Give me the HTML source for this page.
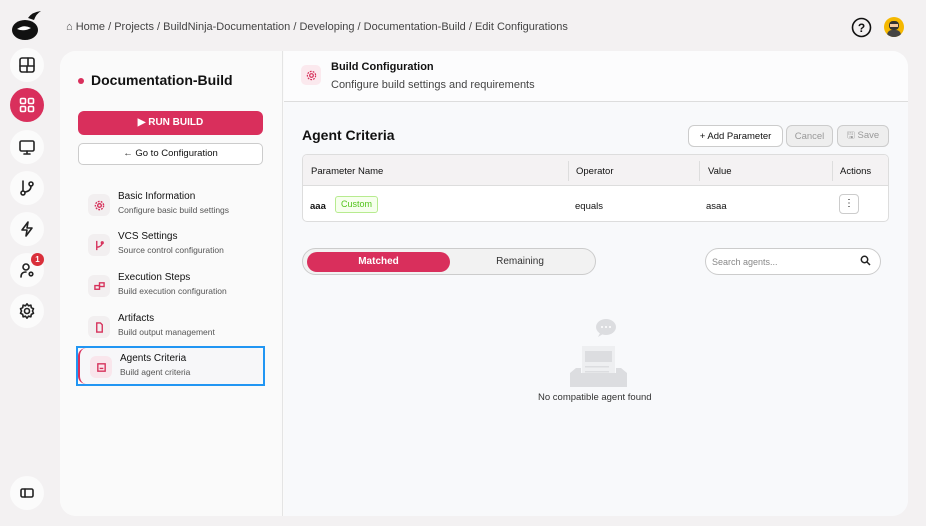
<!DOCTYPE html>
<html><head><meta charset="utf-8"><style>
*{box-sizing:border-box;margin:0;padding:0}
body{width:926px;height:526px;background:#f3f1f2;font-family:"Liberation Sans",sans-serif;position:relative;overflow:hidden;color:#111}
.abs{position:absolute}
.sb{position:absolute;left:10px;width:34px;height:34px;border-radius:50%;background:#fbfbfb;display:flex;align-items:center;justify-content:center}
.sb svg{width:18px;height:18px;fill:none;stroke:#222;stroke-width:1.6;stroke-linecap:round;stroke-linejoin:round}
.crumb{left:66px;top:21px;font-size:11px;color:#444}
.card{left:60px;top:51px;width:848px;height:465px;background:#fafafa;border-radius:16px;overflow:hidden}
.left{left:0;top:0;width:223px;height:465px;background:#fafafa;border-right:1px solid #e4e4e4}
.right{left:224px;top:0;width:624px;height:465px;background:#f8f9fb}
.item{position:absolute;left:28px;width:180px;height:36px}
.item .ic{position:absolute;left:0;top:3px;width:22px;height:22px;border-radius:6px;background:#f2eff0;display:flex;align-items:center;justify-content:center}
.item .ic svg{width:11px;height:11px;fill:none;stroke:#d6305a;stroke-width:1.5}
.item .t{position:absolute;left:30px;top:0;font-size:10px;color:#111}
.item .s{position:absolute;left:30px;top:14px;font-size:8.5px;color:#555}
.btn{position:absolute;height:22px;border:1px solid #ccc;border-radius:6px;font-size:9.5px;display:flex;align-items:center;justify-content:center;background:#fff}
</style></head><body>
<!-- logo -->
<svg class="abs" style="left:10px;top:8px" width="34" height="34" viewBox="0 0 34 34"><ellipse cx="15" cy="22" rx="13" ry="10" fill="#111"/><path d="M18 10 Q22 4 31 3 Q26 6 24 12Z" fill="#111"/><path d="M7 21 Q14 16 21 20 Q14 24 7 21Z" fill="#fff"/></svg>
<div class="sb" style="top:48px"><svg viewBox="0 0 18 18"><rect x="2" y="2" width="14" height="14" rx="2"/><path d="M2 10h14M9 10v6M10 2v8"/></svg></div>
<div class="sb" style="top:88px;background:#d92f5c"><svg viewBox="0 0 18 18" style="stroke:#fff"><rect x="2.5" y="2.5" width="5" height="5" rx="1.2"/><rect x="10.5" y="2.5" width="5" height="5" rx="1.2"/><rect x="2.5" y="10.5" width="5" height="5" rx="1.2"/><rect x="10.5" y="10.5" width="5" height="5" rx="1.2"/></svg></div>
<div class="sb" style="top:130px"><svg viewBox="0 0 18 18"><rect x="2" y="3" width="14" height="10" rx="1.5"/><path d="M9 13v3M6 16h6"/></svg></div>
<div class="sb" style="top:171px"><svg viewBox="0 0 18 18"><circle cx="5" cy="14" r="2"/><circle cx="13" cy="5" r="2"/><path d="M5 2v10M13 7q0 5-6 6"/></svg></div>
<div class="sb" style="top:212px"><svg viewBox="0 0 18 18"><path d="M10 2L4 10h5l-1 6 6-8H9z"/></svg></div>
<div class="sb" style="top:253px"><svg viewBox="0 0 18 18"><circle cx="8" cy="6" r="3"/><path d="M3 16q0-5 5-5"/><circle cx="13" cy="13" r="1.8"/></svg></div>
<div class="abs" style="left:31px;top:253px;width:13px;height:13px;border-radius:50%;background:#d92f3a;color:#fff;font-size:8px;font-weight:bold;text-align:center;line-height:13px">1</div>
<div class="sb" style="top:294px"><svg viewBox="0 0 18 18"><circle cx="9" cy="9" r="2.5"/><path d="M9 1.8l1.5 2 2.4-.6.4 2.4 2.2 1.1-1 2.3 1 2.3-2.2 1.1-.4 2.4-2.4-.6L9 16.2l-1.5-2-2.4.6-.4-2.4-2.2-1.1 1-2.3-1-2.3 2.2-1.1.4-2.4 2.4.6z"/></svg></div>
<div class="sb" style="top:476px"><svg viewBox="0 0 18 18"><rect x="3" y="5" width="12" height="8" rx="1.5"/><path d="M7 5v8"/></svg></div>
<div class="abs crumb">⌂ Home / Projects / BuildNinja-Documentation / Developing / Documentation-Build / Edit Configurations</div>
<svg class="abs" style="left:851px;top:17px" width="21" height="21" viewBox="0 0 21 21"><circle cx="10.5" cy="10.5" r="9" fill="none" stroke="#111" stroke-width="1.6"/><text x="10.5" y="15" font-size="12" text-anchor="middle" font-family="Liberation Sans" font-weight="bold" fill="#111">?</text></svg>
<div class="abs" style="left:884px;top:17px;width:20px;height:20px;border-radius:50%;background:#f5b800;overflow:hidden"><div style="position:absolute;left:5px;top:4px;width:10px;height:9px;background:#333;border-radius:4px"></div><div style="position:absolute;left:6px;top:7px;width:8px;height:3px;background:#f2c9a0"></div><div style="position:absolute;left:3px;top:13px;width:14px;height:8px;background:#444;border-radius:5px 5px 0 0"></div></div>

<div class="abs card">
 <div class="abs left">
  <div class="abs" style="left:18px;top:27px;width:6px;height:6px;border-radius:50%;background:#d92f5c"></div>
  <div class="abs" style="left:31px;top:21px;font-size:14px;font-weight:bold">Documentation-Build</div>
  <div class="abs" style="left:18px;top:60px;width:185px;height:24px;background:#d92f5c;border-radius:6px;color:#fff;font-size:10px;font-weight:bold;text-align:center;line-height:24px">▶ RUN BUILD</div>
  <div class="abs" style="left:18px;top:92px;width:185px;height:22px;background:#fff;border:1px solid #ccc;border-radius:5px;font-size:9.5px;text-align:center;line-height:20px">← Go to Configuration</div>
  <div class="item" style="top:140px"><div class="ic"><svg viewBox="0 0 12 12"><circle cx="6" cy="6" r="2"/><circle cx="6" cy="6" r="4.5" stroke-dasharray="2 1.2"/></svg></div><div class="t">Basic Information</div><div class="s">Configure basic build settings</div></div>
  <div class="item" style="top:180px"><div class="ic"><svg viewBox="0 0 12 12"><path d="M3 1v10M9 3q0 4-6 5"/><circle cx="9" cy="3" r="1"/></svg></div><div class="t">VCS Settings</div><div class="s">Source control configuration</div></div>
  <div class="item" style="top:221px"><div class="ic"><svg viewBox="0 0 12 12"><rect x="1" y="5" width="5" height="4"/><rect x="6" y="2" width="5" height="4"/></svg></div><div class="t">Execution Steps</div><div class="s">Build execution configuration</div></div>
  <div class="item" style="top:262px"><div class="ic"><svg viewBox="0 0 12 12"><path d="M3 1h4l2 2v8H3z"/></svg></div><div class="t">Artifacts</div><div class="s">Build output management</div></div>
  <div class="abs" style="left:16px;top:295px;width:189px;height:40px;border:2px solid #2196f3"></div>
  <div class="abs" style="left:18px;top:297px;width:185px;height:36px;border-left:2px solid #d92f5c;border-radius:8px;background:#f7f7f9"></div>
  <div class="item" style="top:302px;left:30px"><div class="ic" style="background:#f9e6ec"><svg viewBox="0 0 12 12"><rect x="2" y="2" width="8" height="8"/><path d="M4 7h4"/></svg></div><div class="t">Agents Criteria</div><div class="s">Build agent criteria</div></div>
 </div>
 <div class="abs right">
  <div class="abs" style="left:0;top:0;width:624px;height:51px;background:#fcfcfd;border-bottom:1px solid #ddd"></div>
  <div class="abs" style="left:17px;top:14px;width:20px;height:20px;border-radius:5px;background:#fbe9ee;display:flex;align-items:center;justify-content:center"><svg width="11" height="11" viewBox="0 0 12 12" fill="none" stroke="#d6305a" stroke-width="1.3"><circle cx="6" cy="6" r="2"/><circle cx="6" cy="6" r="4.5" stroke-dasharray="2 1.2"/></svg></div>
  <div class="abs" style="left:47px;top:10px;font-size:11px;font-weight:bold">Build Configuration</div>
  <div class="abs" style="left:47px;top:28px;font-size:11px;color:#444">Configure build settings and requirements</div>
  <div class="abs" style="left:18px;top:76px;font-size:14px;font-weight:bold">Agent Criteria</div>
  <div class="btn" style="left:404px;top:74px;width:95px">+ Add Parameter</div>
  <div class="btn" style="left:502px;top:74px;width:47px;background:#eee;color:#999">Cancel</div>
  <div class="btn" style="left:553px;top:74px;width:52px;background:#eee;color:#999">🖫 Save</div>
  <div class="abs" style="left:18px;top:103px;width:587px;height:68px;border:1px solid #ddd;border-radius:5px;background:#fff;overflow:hidden;font-size:9.5px">
   <div class="abs" style="left:0;top:0;width:587px;height:31px;background:#f4f2f3;border-bottom:1px solid #ddd"></div>
   <div class="abs" style="left:8px;top:11px">Parameter Name</div>
   <div class="abs" style="left:265px;top:6px;width:1px;height:20px;background:#ddd"></div>
   <div class="abs" style="left:273px;top:11px">Operator</div>
   <div class="abs" style="left:396px;top:6px;width:1px;height:20px;background:#ddd"></div>
   <div class="abs" style="left:405px;top:11px">Value</div>
   <div class="abs" style="left:529px;top:6px;width:1px;height:20px;background:#ddd"></div>
   <div class="abs" style="left:537px;top:11px">Actions</div>
   <div class="abs" style="left:7px;top:46px;font-weight:bold">aaa</div>
   <div class="abs" style="left:32px;top:41px;width:43px;height:17px;border:1px solid #b7eb8f;background:#f6ffed;color:#52c41a;border-radius:3px;font-size:9px;text-align:center;line-height:15px">Custom</div>
   <div class="abs" style="left:272px;top:46px">equals</div>
   <div class="abs" style="left:403px;top:46px">asaa</div>
   <div class="abs" style="left:536px;top:39px;width:20px;height:20px;border:1px solid #ccc;border-radius:4px;text-align:center;line-height:18px;font-size:10px">⋮</div>
  </div>
  <div class="abs" style="left:18px;top:197px;width:294px;height:27px;border:1px solid #ccc;border-radius:14px;background:#f2f2f2"></div>
  <div class="abs" style="left:23px;top:201px;width:143px;height:20px;border-radius:10px;background:#d92f5c;color:#fff;font-size:10px;font-weight:bold;text-align:center;line-height:20px">Matched</div>
  <div class="abs" style="left:166px;top:201px;width:140px;height:20px;font-size:10px;color:#333;text-align:center;line-height:20px">Remaining</div>
  <div class="abs" style="left:421px;top:197px;width:176px;height:27px;border:1px solid #ccc;border-radius:14px;background:#fff;font-size:9px;color:#888;padding:8px 0 0 6px">Search agents...</div>
  <svg class="abs" style="left:576px;top:204px" width="11" height="11" viewBox="0 0 11 11" fill="none" stroke="#222" stroke-width="1.5"><circle cx="4.5" cy="4.5" r="3.2"/><path d="M7 7l3 3"/></svg>
  <svg class="abs" style="left:280px;top:264px" width="80" height="72" viewBox="0 0 80 72"><ellipse cx="42" cy="12" rx="10" ry="8" fill="#dcdde0"/><path d="M36 18 l-2 4 5-3z" fill="#dcdde0"/><circle cx="38" cy="12" r="1" fill="#fff"/><circle cx="42" cy="12" r="1" fill="#fff"/><circle cx="46" cy="12" r="1" fill="#fff"/><rect x="18" y="31" width="33" height="37" fill="#eeeff1"/><rect x="21" y="36" width="27" height="11" fill="#dcdde0"/><rect x="21" y="51" width="24" height="1.5" fill="#dcdde0"/><rect x="21" y="56" width="24" height="1.5" fill="#dcdde0"/><path d="M6 58 l6-5 h5 v5 h35 v-5 h5 l6 5 v22 H6z" fill="#dcdde0"/></svg>
  <div class="abs" style="left:254px;top:341px;font-size:9.5px;color:#333">No compatible agent found</div>
 </div>
</div>
</body></html>
